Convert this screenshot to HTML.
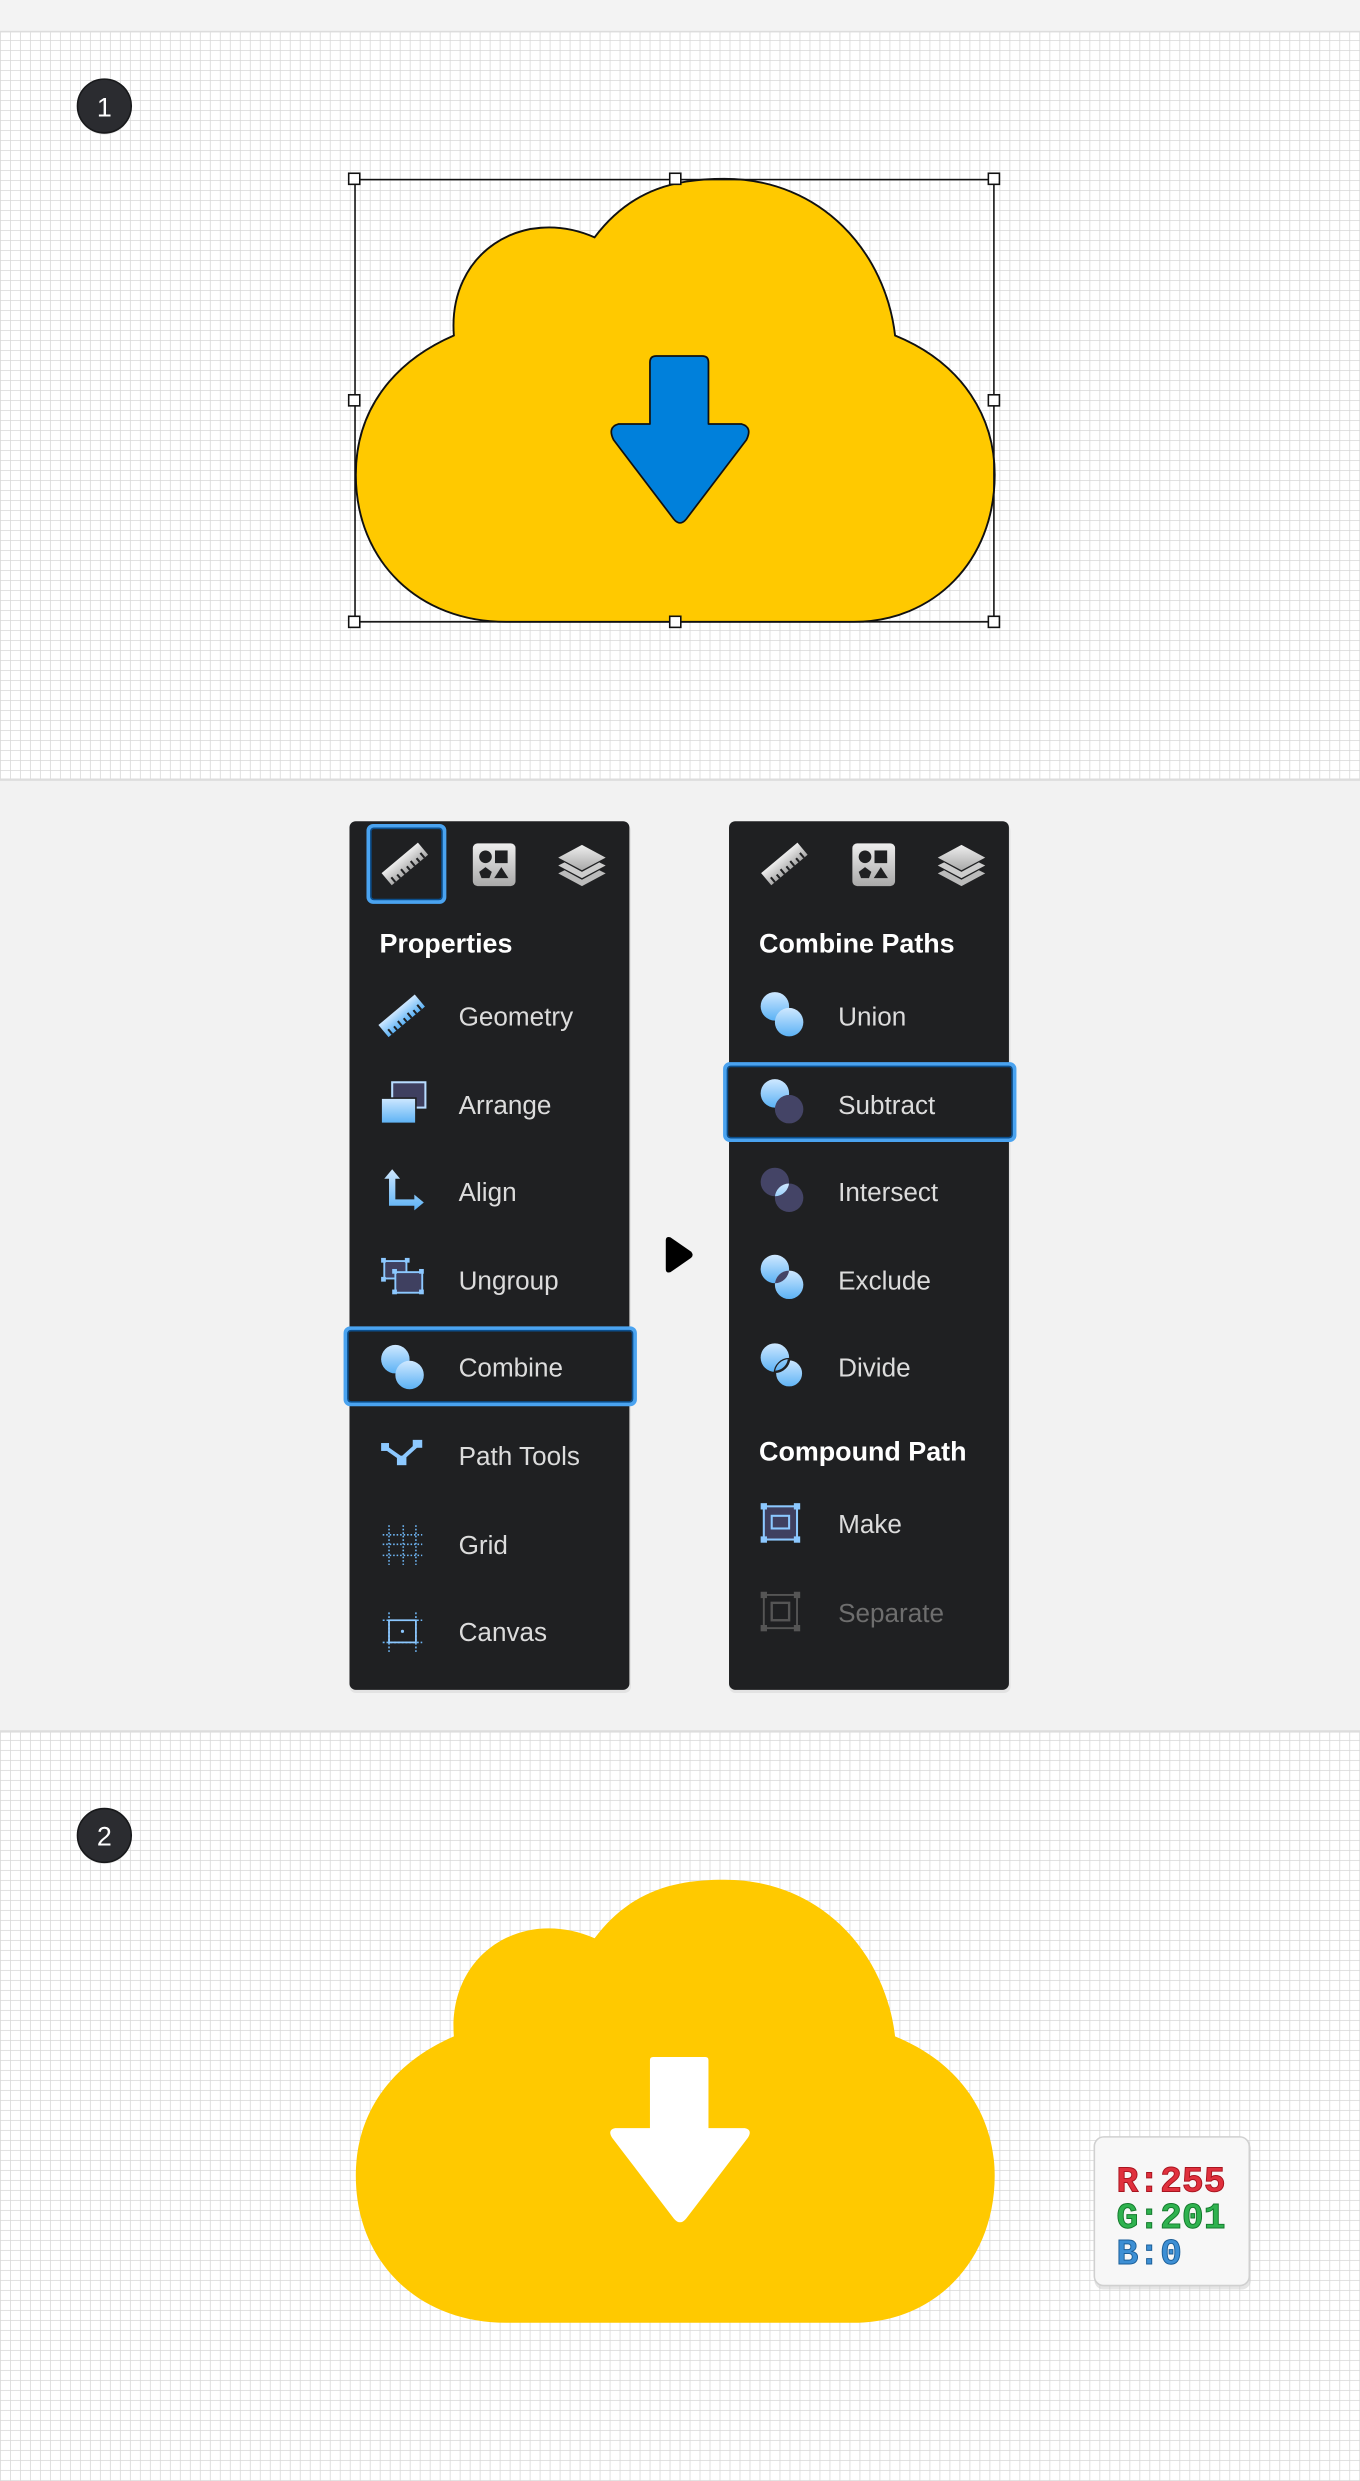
<!DOCTYPE html>
<html><head><meta charset="utf-8"><style>
html,body{margin:0;padding:0;background:#f2f2f2}
svg{display:block}
text{font-family:"Liberation Sans",sans-serif}
text.mono{font-family:"Liberation Mono","DejaVu Sans Mono",monospace}
</style></head><body>
<svg width="1360" height="2481" viewBox="0 0 860 1568" preserveAspectRatio="none" xmlns="http://www.w3.org/2000/svg">
<defs>
<pattern id="g" width="6.32" height="6.32" patternUnits="userSpaceOnUse">
<rect width="6.32" height="6.32" fill="#fff"/>
<path d="M0 0H6.32M0 0V6.32" stroke="#d8d8d8" stroke-width="1"/>
</pattern>
<linearGradient id="bl" x1="0" y1="0" x2="0" y2="1"><stop offset="0" stop-color="#cfe8ff"/><stop offset="1" stop-color="#5cb2f5"/></linearGradient>
<linearGradient id="gr" x1="0" y1="0" x2="0" y2="1"><stop offset="0" stop-color="#eee"/><stop offset="1" stop-color="#a9a9a9"/></linearGradient>
<path id="cloud" d="M320 393 L540 393 C590 393 629 355 629 300 C629 265 610 230 566 212 C560 160 520 113 458 113 C430 113 400 118 376 150 C330 130 283 160 287 212 C250 228 225 258 225 300 C225 355 265 393 320 393 Z"/>
</defs>
<rect width="860" height="1568" fill="#f2f2f2"/>
<rect x="0" y="0" width="860" height="20" fill="#f3f3f3"/>
<rect x="0" y="20" width="860" height="472" fill="url(#g)"/>
<rect x="0" y="19.5" width="860" height="1" fill="#ddd"/>
<rect x="0" y="492" width="860" height="1.5" fill="#ddd"/>
<rect x="0" y="1094" width="860" height="474" fill="url(#g)"/>
<rect x="0" y="1093.5" width="860" height="1.5" fill="#ddd"/>

<circle cx="66" cy="68" r="17" fill="#ccc" opacity=".6"/>
<circle cx="66" cy="67" r="17" fill="#2b2c30" stroke="#18191b" stroke-width="1"/>
<text x="66" y="73.5" font-size="17" fill="#fff" text-anchor="middle">1</text>
<circle cx="66" cy="1161" r="17" fill="#ccc" opacity=".6"/>
<circle cx="66" cy="1160" r="17" fill="#2b2c30" stroke="#18191b" stroke-width="1"/>
<text x="66" y="1166.5" font-size="17" fill="#fff" text-anchor="middle">2</text>

<use href="#cloud" fill="#ffc900" stroke="#111" stroke-width="1.2"/>
<path d="M415 225 H444 Q448 225 448 229 V268 H469 Q476 270 472 278 L434 328 Q430 333 426 328 L388 278 Q384 270 391 268 H411 V229 Q411 225 415 225 Z" fill="#0080db" stroke="#111" stroke-width="1.1" stroke-linejoin="round"/>
<rect x="224.5" y="113.5" width="404" height="279.5" fill="none" stroke="#111" stroke-width="1"/>
<g fill="#fff" stroke="#111" stroke-width="1">
<rect x="220.5" y="109.5" width="7" height="7"/><rect x="423.5" y="109.5" width="7" height="7"/><rect x="625" y="109.5" width="7" height="7"/>
<rect x="220.5" y="249.5" width="7" height="7"/><rect x="625" y="249.5" width="7" height="7"/>
<rect x="220.5" y="389.5" width="7" height="7"/><rect x="423.5" y="389.5" width="7" height="7"/><rect x="625" y="389.5" width="7" height="7"/>
</g>

<g transform="translate(0,1075)">
<use href="#cloud" fill="#ffc900"/>
<path d="M413 225 H446 Q448 225 448 227 V270 H471 Q476 271 473 276 L434 327 Q430 332 426 327 L387 276 Q384 271 389 270 H411 V227 Q411 225 413 225 Z" fill="#fff"/>
</g>

<rect x="692" y="1352" width="99" height="95" rx="6" fill="#ccc" opacity=".5"/>
<rect x="692" y="1350.5" width="98" height="94" rx="6" fill="#f7f7f7" stroke="#d0d0d0" stroke-width="1"/>
<text class="mono" x="706" y="1385" font-size="23" font-weight="bold" fill="#e0303d" stroke="#a8141f" stroke-width=".6">R:255</text>
<text class="mono" x="706" y="1408" font-size="23" font-weight="bold" fill="#2fb24f" stroke="#137a2c" stroke-width=".6">G:201</text>
<text class="mono" x="706" y="1431" font-size="23" font-weight="bold" fill="#3d8fd4" stroke="#1a5e98" stroke-width=".6">B:0</text>

<path d="M421 784 Q421 781 424 782 L437 791 Q439 793 437 795 L424 804 Q421 805 421 802 Z" fill="#000"/>

<rect x="221" y="521" width="178" height="549" rx="4" fill="#ccc" opacity=".4"/>
<rect x="221" y="519" width="177" height="549" rx="4" fill="#1f2022"/>
<rect x="233" y="522" width="48" height="48" rx="3" fill="none" stroke="#4aa3f0" stroke-width="2.5"/>
<rect x="234.5" y="523.5" width="45" height="45" rx="2" fill="none" stroke="#0b4e8c" stroke-width="1"/>
<g transform="translate(256,546) rotate(-40)"><rect x="-15" y="-5" width="30" height="10" fill="url(#gr)"/><path d="M-12 5V1M-8 5V2M-4 5V1M0 5V2M4 5V1M8 5V2M12 5V1" stroke="#1f2022" stroke-width="1.3"/></g>
<rect x="299" y="533" width="27" height="27" rx="3" fill="url(#gr)"/>
<circle cx="307" cy="541.5" r="4" fill="#1f2022"/><rect x="313" y="537.5" width="8" height="8" fill="#1f2022"/>
<path d="M307 548 L311 551 L309.5 555 H304.5 L303 551 Z" fill="#1f2022"/><path d="M317 548 L321.5 555 H312.5 Z" fill="#1f2022"/>
<path d="M353 542 L368 534 L383 542 L368 550 Z" fill="url(#gr)"/>
<path d="M353 547 L357 545 L368 551 L379 545 L383 547 L368 555 Z" fill="#ccc"/>
<path d="M353 552 L357 550 L368 556 L379 550 L383 552 L368 560 Z" fill="#bbb"/>
<text x="240" y="602" font-size="17" fill="#fff" style="font-weight:600">Properties</text>
<rect x="218.5" y="839.5" width="183" height="48" rx="3" fill="#1f2022" stroke="#4aa3f0" stroke-width="2.5"/>
<rect x="220" y="841" width="180" height="45" rx="2" fill="none" stroke="#0b4e8c" stroke-width="1"/>
<g font-size="16.5" fill="#dcdcdc">
<text x="290" y="648">Geometry</text>
<text x="290" y="704">Arrange</text>
<text x="290" y="759">Align</text>
<text x="290" y="815">Ungroup</text>
<text x="290" y="870">Combine</text>
<text x="290" y="926">Path Tools</text>
<text x="290" y="982">Grid</text>
<text x="290" y="1037">Canvas</text>
</g>
<g transform="translate(254,642) rotate(-40)"><rect x="-15" y="-5" width="30" height="10" fill="url(#bl)"/><path d="M-12 5V1M-8 5V2M-4 5V1M0 5V2M4 5V1M8 5V2M12 5V1" stroke="#1f2022" stroke-width="1.3"/></g>
<rect x="248" y="684" width="21" height="16" fill="#3f4060" stroke="#b8dcff" stroke-width="1.3"/>
<rect x="241" y="694" width="22" height="16" fill="url(#bl)" stroke="#1f2022" stroke-width="1"/>
<path d="M248 739 L243 745 H246 V762 H262 V765 L268 760 L262 755 V758 H250 V745 H253 Z" fill="url(#bl)"/>
<rect x="243" y="797" width="14" height="11" fill="#3f4060" stroke="#8cc8ff" stroke-width="1.2"/>
<rect x="250" y="804" width="17" height="13" fill="#3f4060" stroke="#8cc8ff" stroke-width="1.2"/>
<g fill="#8cc8ff"><rect x="241" y="795" width="3" height="3"/><rect x="256" y="795" width="3" height="3"/><rect x="241" y="807" width="3" height="3"/><rect x="248" y="802" width="3" height="3"/><rect x="265" y="802" width="3" height="3"/><rect x="248" y="815" width="3" height="3"/><rect x="265" y="815" width="3" height="3"/></g>
<circle cx="250" cy="859" r="9" fill="url(#bl)"/><circle cx="259" cy="869" r="9" fill="url(#bl)"/>
<path d="M244 915 L254 922 L264 913" stroke="#8cc8ff" stroke-width="2.5" fill="none"/>
<rect x="241" y="912" width="5" height="5" fill="#8cc8ff"/><rect x="251" y="920" width="6" height="6" fill="#8cc8ff"/><rect x="261" y="910" width="6" height="5" fill="#8cc8ff"/>
<g stroke="#6fb6f5" stroke-width="1" stroke-dasharray="1 1.2"><path d="M242 970H267M242 976H267M242 983H267M246 964V989M255 964V989M263 964V989"/></g>
<g stroke="#6fb6f5" stroke-width="1" stroke-dasharray="1.2 1.2"><path d="M242 1024H267M242 1038H267M246 1019V1044M263 1019V1044"/></g>
<rect x="246" y="1024" width="17" height="14" fill="none" stroke="#8cc8ff" stroke-width="1.1"/>
<circle cx="254.5" cy="1031" r="1" fill="#8cc8ff"/>

<rect x="461" y="521" width="178" height="549" rx="4" fill="#ccc" opacity=".4"/>
<rect x="461" y="519" width="177" height="549" rx="4" fill="#1f2022"/>
<g transform="translate(496,546) rotate(-40)"><rect x="-15" y="-5" width="30" height="10" fill="url(#gr)"/><path d="M-12 5V1M-8 5V2M-4 5V1M0 5V2M4 5V1M8 5V2M12 5V1" stroke="#1f2022" stroke-width="1.3"/></g>
<rect x="539" y="533" width="27" height="27" rx="3" fill="url(#gr)"/>
<circle cx="547" cy="541.5" r="4" fill="#1f2022"/><rect x="553" y="537.5" width="8" height="8" fill="#1f2022"/>
<path d="M547 548 L551 551 L549.5 555 H544.5 L543 551 Z" fill="#1f2022"/><path d="M557 548 L561.5 555 H552.5 Z" fill="#1f2022"/>
<path d="M593 542 L608 534 L623 542 L608 550 Z" fill="url(#gr)"/>
<path d="M593 547 L597 545 L608 551 L619 545 L623 547 L608 555 Z" fill="#ccc"/>
<path d="M593 552 L597 550 L608 556 L619 550 L623 552 L608 560 Z" fill="#bbb"/>
<text x="480" y="602" font-size="17" fill="#fff" style="font-weight:600">Combine Paths</text>
<text x="480" y="923" font-size="17" fill="#fff" style="font-weight:600">Compound Path</text>
<rect x="458.5" y="672.5" width="183" height="48" rx="3" fill="#1f2022" stroke="#4aa3f0" stroke-width="2.5"/>
<rect x="460" y="674" width="180" height="45" rx="2" fill="none" stroke="#0b4e8c" stroke-width="1"/>
<g font-size="16.5" fill="#dcdcdc">
<text x="530" y="648">Union</text>
<text x="530" y="704">Subtract</text>
<text x="530" y="759">Intersect</text>
<text x="530" y="815">Exclude</text>
<text x="530" y="870">Divide</text>
<text x="530" y="969">Make</text>
<text x="530" y="1025" fill="#6e6e6e">Separate</text>
</g>
<circle cx="490" cy="636" r="9" fill="url(#bl)"/><circle cx="499" cy="646" r="9" fill="url(#bl)"/>
<circle cx="490" cy="691" r="9" fill="url(#bl)"/><circle cx="499" cy="701" r="9" fill="#444466"/>
<clipPath id="ci"><circle cx="490" cy="747" r="9"/></clipPath>
<circle cx="490" cy="747" r="9" fill="#444466"/><circle cx="499" cy="757" r="9" fill="#444466"/>
<circle cx="499" cy="757" r="9" fill="url(#bl)" clip-path="url(#ci)"/>
<clipPath id="ce"><circle cx="490" cy="802" r="9"/></clipPath>
<circle cx="490" cy="802" r="9" fill="url(#bl)"/><circle cx="499" cy="812" r="9" fill="url(#bl)"/>
<circle cx="499" cy="812" r="9" fill="#444466" clip-path="url(#ce)"/>
<circle cx="490" cy="858" r="9" fill="url(#bl)"/><circle cx="499" cy="868" r="9" fill="url(#bl)" stroke="#1f2022" stroke-width="1.6"/>
<clipPath id="cd"><circle cx="499" cy="868" r="9"/></clipPath>
<circle cx="490" cy="858" r="9" fill="url(#bl)" stroke="#1f2022" stroke-width="1.6" clip-path="url(#cd)"/>
<rect x="483" y="952" width="21" height="21" fill="#3f4060" stroke="#8cc8ff" stroke-width="1.3"/>
<rect x="488" y="958" width="11" height="8" fill="none" stroke="#8cc8ff" stroke-width="1.3"/>
<g fill="#8cc8ff"><rect x="481" y="950" width="4" height="4"/><rect x="502" y="950" width="4" height="4"/><rect x="481" y="971" width="4" height="4"/><rect x="502" y="971" width="4" height="4"/></g>
<rect x="483" y="1008" width="21" height="21" fill="none" stroke="#555" stroke-width="1.2"/>
<rect x="488" y="1013" width="11" height="11" fill="none" stroke="#555" stroke-width="1.5"/>
<g fill="#555"><rect x="481" y="1006" width="4" height="4"/><rect x="502" y="1006" width="4" height="4"/><rect x="481" y="1027" width="4" height="4"/><rect x="502" y="1027" width="4" height="4"/></g>
</svg>
</body></html>
